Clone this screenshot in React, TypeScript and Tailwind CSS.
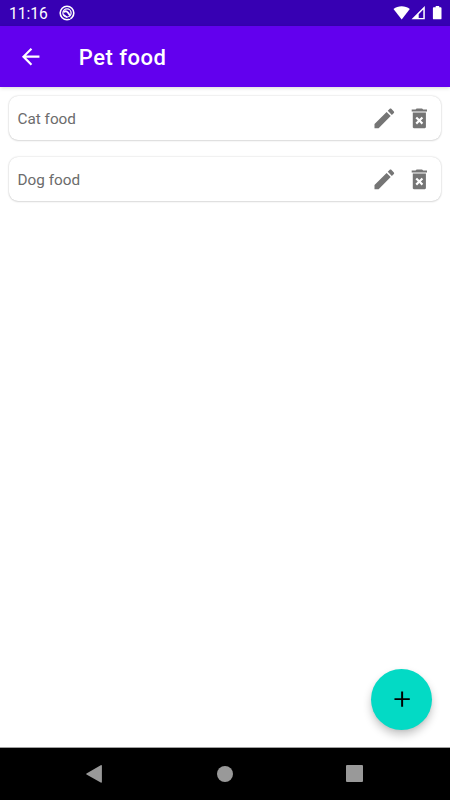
import React from 'react';

// ============================================
// TYPES
// ============================================

interface Category {
  id: number;
  name: string;
}

interface IconProps {
  d: string;
  viewBox?: string;
}

const CATEGORIES: Category[] = [
  { id: 1, name: 'Cat food' },
  { id: 2, name: 'Dog food' },
];

// ============================================
// ICONS
// ============================================

const PATHS = {
  back: 'M20 11H7.83l5.59-5.59L12 4l-8 8 8 8 1.41-1.41L7.83 13H20v-2z',
  edit: 'M3 17.25V21h3.75L17.81 9.94l-3.75-3.75L3 17.25zM20.71 7.04c.39-.39.39-1.02 0-1.41l-2.34-2.34c-.39-.39-1.02-.39-1.41 0l-1.83 1.83 3.75 3.75 1.83-1.83z',
  remove:
    'M6 20c0 .6.5 1 1 1h10c.5 0 1-.4 1-1V6.6H6V20zm2.46-8.12l1.41-1.41L12 12.59l2.12-2.12 1.41 1.41L13.41 14l2.12 2.12-1.41 1.41L12 15.41l-2.12 2.12-1.41-1.41L10.59 14l-2.13-2.12zM15.5 4l-1-1h-5l-1 1H5v1.8h14V4z',
  add: 'M19 12.9h-6.1V19h-1.8v-6.1H5v-1.8h6.1V5h1.8v6.1H19v1.8z',
};

const Icon: React.FC<IconProps> = ({ d, viewBox = '0 0 24 24' }) => (
  <svg className="h-[26.25px] w-[26.25px] shrink-0" viewBox={viewBox} fill="currentColor">
    <path d={d} />
  </svg>
);

// ============================================
// STATUS BAR
// ============================================

const StatusBar: React.FC = () => (
  <div className="flex h-[26px] shrink-0 items-center bg-[#3700b3] pl-[9px] pr-2 text-white">
    <span className="w-[50px] pt-[3px] text-[15.6px] leading-none">11:16</span>
    <svg className="h-4 w-4" viewBox="0 0 16 16" fill="none" stroke="currentColor">
      <circle cx="8" cy="8" r="6.8" strokeWidth="1.6" />
      <circle cx="8" cy="8" r="4.1" strokeWidth="1.3" />
      <path d="M4.5 7c2.5-1.8 4-.8 6.5 3.6" strokeWidth="1.9" />
      <path d="M4.4 9.6L8.2 12.2" strokeWidth="1.3" />
      <path d="M8.8 12.2l2.8 2" stroke="#3700b3" strokeWidth="0.9" />
    </svg>
    <svg className="ml-auto h-[26px] w-[50px]" viewBox="0 0 50 26" fill="currentColor">
      <path d="M1.5 9.1C6 5.4 13.3 5.4 17.8 9.1L9.7 19.4z" />
      <path d="M32.8 6v13.3H19.5L32.8 6zm-1.5 3.6l-4.6 4.6v3.7h4.6z" fillRule="evenodd" />
      <path d="M43.7 6h3.5v1.3h1.4q.9 0 .9.9v10.2q0 .9-.9.9h-6.8q-.9 0-.9-.9V8.2q0-.9.9-.9h1.9z" />
    </svg>
  </div>
);

// ============================================
// LIST ROW
// ============================================

const CategoryRow: React.FC<{ category: Category }> = ({ category }) => (
  <li className="flex h-[44px] items-center rounded-[9px] bg-white pl-[9px] pr-[9px] shadow-[0_1px_2px_rgba(0,0,0,0.1),0_0_2px_rgba(0,0,0,0.2)]">
    <span className="flex-1 pt-[2px] text-[15.3px] text-[#6c6c6c]">{category.name}</span>
    <div className="flex gap-[9px] text-[#757575]">
      <button aria-label="Edit">
        <Icon d={PATHS.edit} viewBox="-0.2 -0.2 24 24" />
      </button>
      <button aria-label="Delete">
        <Icon d={PATHS.remove} viewBox="-0.2 -0.2 24 24" />
      </button>
    </div>
  </li>
);

// ============================================
// SCREEN
// ============================================

const App: React.FC = () => (
  <div className="flex h-[800px] w-[450px] flex-col overflow-hidden bg-white font-['Roboto',sans-serif]">
    <StatusBar />

    <header className="z-10 flex h-[61px] shrink-0 items-center bg-[#6200ee] pl-[17.5px] text-white shadow-[0_1px_4px_rgba(0,0,0,0.16)]">
      <button aria-label="Back">
        <Icon d={PATHS.back} viewBox="0.4 -0.5 24 24" />
      </button>
      <h1 className="ml-[35px] pt-[3px] text-[22px] font-medium leading-none tracking-[0.5px]">Pet food</h1>
    </header>

    <main className="flex flex-1 flex-col justify-between">
      <ul className="flex flex-col gap-[17.4px] pl-[8.5px] pr-[9px] pt-[9px]">
        {CATEGORIES.map((category) => (
          <CategoryRow key={category.id} category={category} />
        ))}
      </ul>
      <button
        aria-label="Add"
        className="mb-[17px] mr-[17.7px] flex h-[61px] w-[61px] items-center justify-center self-end rounded-full bg-[#03dac5] text-black shadow-[0_5px_9px_rgba(0,0,0,0.22),0_1px_3px_rgba(0,0,0,0.06)]"
      >
        <Icon d={PATHS.add} />
      </button>
    </main>

    <nav className="flex h-[53px] shrink-0 items-center justify-between border-t border-[#a0a0a0] bg-black pl-[86px] pr-[86.6px] text-[#999999]">
      <svg className="h-[18px] w-[17px]" viewBox="0 0 17 18" fill="currentColor">
        <path d="M.5 8.4L14.7 .2q1.2-.5 1.2.8v15.8q0 1.3-1.2.8L.5 9.6q-.6-.6 0-1.2z" />
      </svg>
      <svg className="mb-[1px] ml-[1px] h-4 w-4" viewBox="0 0 16 16" fill="currentColor">
        <circle cx="8" cy="8" r="8" />
      </svg>
      <div className="mb-[1px] h-[17px] w-[17px] rounded-[1px] bg-[#999999]" />
    </nav>
  </div>
);

export default App;
